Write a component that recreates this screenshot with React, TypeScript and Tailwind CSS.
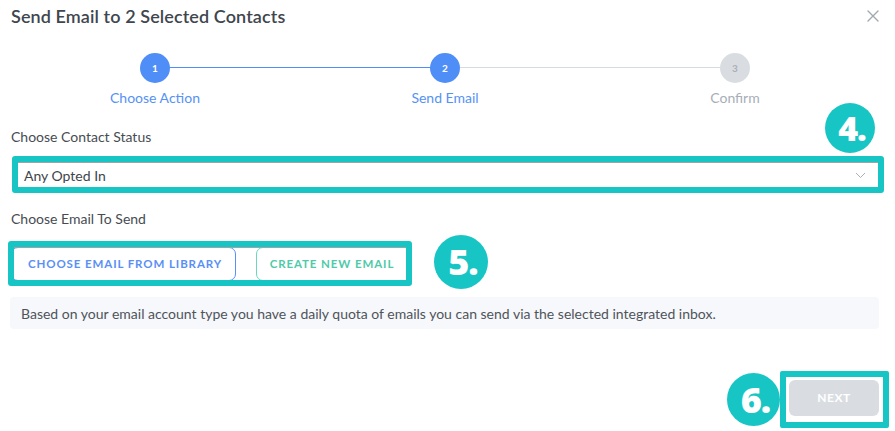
import React from 'react';

const steps = [
  { n: 1, label: 'Choose Action', state: 'done' },
  { n: 2, label: 'Send Email', state: 'active' },
  { n: 3, label: 'Confirm', state: 'todo' },
];

function Badge({ text, className }: { text: string; className: string }) {
  return (
    <div
      className={`absolute flex items-center justify-center rounded-full bg-[#17c6c4] text-white font-extrabold leading-none ${className}`}
      style={{ fontFamily: '"Open Sans", sans-serif' }}
    >
      <span className="pl-[4px] tracking-[-1px]">{text}</span>
    </div>
  );
}

export default function App() {
  return (
    <div
      className="relative w-[895px] h-[431px] overflow-hidden bg-white text-[#474d54]"
      style={{ fontFamily: 'Lato, "Open Sans", sans-serif' }}
    >
      {/* Header */}
      <div className="flex items-center justify-between h-[32px] pl-[11px] pr-[16px]">
        <h1 className="text-[18px] font-semibold text-[#40464d] tracking-[0.1px]">Send Email to 2 Selected Contacts</h1>
        <svg width="12" height="12" viewBox="0 0 12 12" className="text-[#a3a9b0]">
          <path d="M1 1L11 11M11 1L1 11" stroke="currentColor" strokeWidth="1.4" strokeLinecap="round" />
        </svg>
      </div>

      {/* Stepper */}
      <div className="grid grid-cols-3 pl-[10px] pr-[15px] mt-[21px]">
        {steps.map((s, i) => (
          <div key={s.n} className="relative flex flex-col items-center">
            {i > 0 && (
              <div
                className={`absolute left-0 right-1/2 top-[14px] h-[1px] ${
                  s.state === 'todo' ? 'bg-[#d6dbe0]' : 'bg-[#4f8ef6]'
                }`}
              />
            )}
            {i < steps.length - 1 && (
              <div
                className={`absolute left-1/2 right-0 top-[14px] h-[1px] ${
                  steps[i + 1].state === 'todo' ? 'bg-[#d6dbe0]' : 'bg-[#4f8ef6]'
                }`}
              />
            )}
            <div
              className={`relative z-10 flex items-center justify-center w-[30px] h-[30px] rounded-full text-[10px] font-bold ${
                s.state === 'todo' ? 'bg-[#d9dde1] text-[#a9b0b8]' : 'bg-[#4f8ef6] text-white'
              }`}
            >
              {s.n}
            </div>
            <div
              className={`mt-[6px] text-[14px] leading-[17px] ${
                s.state === 'todo' ? 'text-[#a7aeb7]' : 'text-[#5592f5]'
              }`}
            >
              {s.label}
            </div>
          </div>
        ))}
      </div>

      {/* Contact status */}
      <div className="mt-[22px] pl-[11px] text-[14px] leading-[17px] text-[#474c52]">Choose Contact Status</div>
      <div className="mt-[11px] ml-[12px] w-[872px] h-[37px] border-[6px] border-[#17c6c4] rounded-[3px]">
        <div className="flex items-center justify-between h-full bg-white border-t border-[#9ea3a8] pl-[6px] pr-[12px]">
          <span className="text-[14px] text-[#40454b]">Any Opted In</span>
          <svg width="11" height="7" viewBox="0 0 11 7">
            <path d="M1 1L5.5 5.5L10 1" fill="none" stroke="#a9b0b8" strokeWidth="1" />
          </svg>
        </div>
      </div>

      {/* Email choice */}
      <div className="mt-[17px] pl-[11px] text-[14px] leading-[17px] text-[#474c52]">Choose Email To Send</div>
      <div className="mt-[14px] ml-[8px] w-[404px] h-[45px] border-[6px] border-[#17c6c4] rounded-[3px]">
        <div className="flex items-center h-full overflow-hidden bg-white border-t border-[#9ea3a8]">
          <button className="-ml-[3px] -mt-[1px] h-[34px] w-[225px] shrink-0 rounded-[7px] border border-[#5a8ff6] pl-[3px] text-[11.5px] font-bold tracking-[0.9px] text-[#5a8ff6]">
            CHOOSE EMAIL FROM LIBRARY
          </button>
          <button className="ml-[20px] -mt-[1px] h-[34px] w-[160px] shrink-0 rounded-[7px] border border-[#6fd5bd] pr-[8px] text-[11.5px] font-bold tracking-[0.9px] text-[#4fcaa9]">
            CREATE NEW EMAIL
          </button>
        </div>
      </div>

      {/* Info */}
      <div className="mt-[11px] ml-[10px] mr-[16px] h-[32px] flex items-center rounded-[4px] bg-[#f6f8fc] pl-[11px] text-[14px] text-[#4f545a]">
        Based on your email account type you have a daily quota of emails you can send via the selected integrated inbox.
      </div>

      {/* Footer */}
      <div className="flex justify-end mt-[42px] pr-[6px]">
        <div className="w-[109px] h-[57px] border-[6px] border-[#17c6c4] rounded-[2px] bg-white p-[3px]">
          <button className="w-[90px] h-[36px] rounded-[6px] bg-[#d9dde1] text-[12px] font-bold tracking-[0.5px] text-white">
            NEXT
          </button>
        </div>
      </div>

      <Badge text="4." className="left-[825px] top-[103px] w-[50px] h-[50px] text-[34px]" />
      <Badge text="5." className="left-[434px] top-[235px] w-[54px] h-[54px] text-[36px]" />
      <Badge text="6." className="left-[727px] top-[373px] w-[53px] h-[53px] text-[36px]" />
    </div>
  );
}
